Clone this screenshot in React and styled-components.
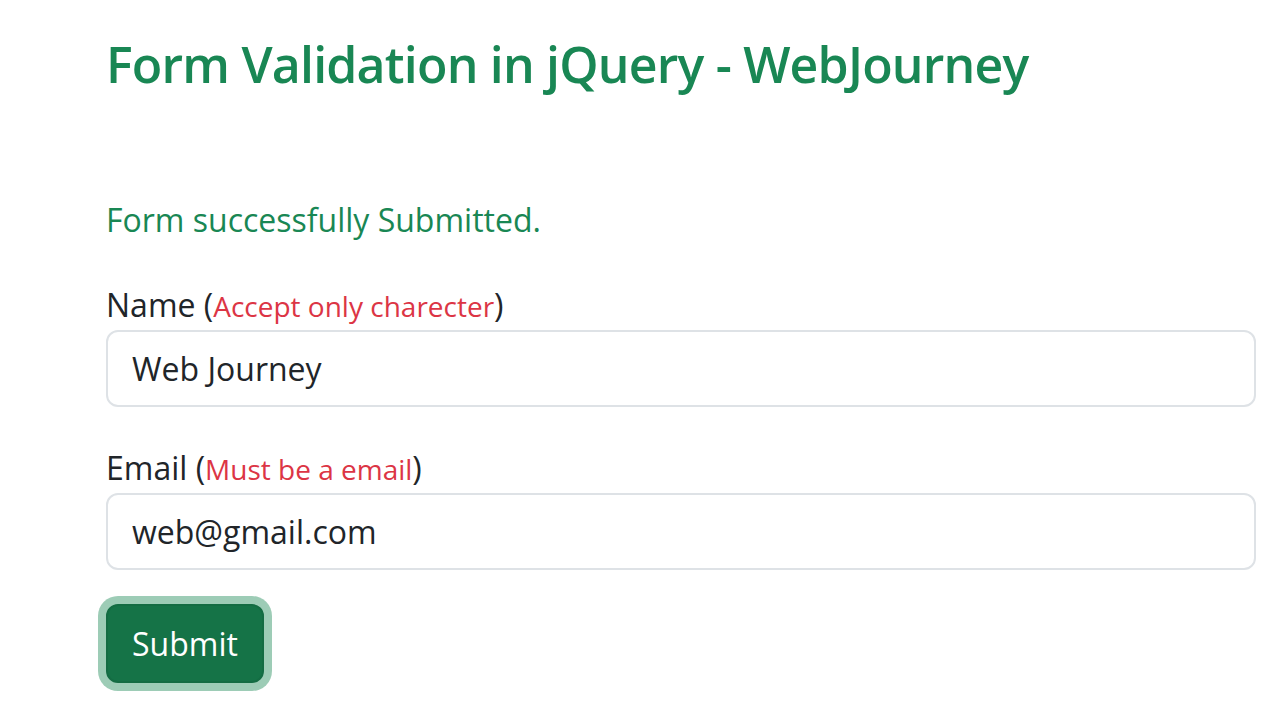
import React from "react";
import styled, { createGlobalStyle } from "styled-components";

const Global = createGlobalStyle`
  html, body { margin: 0; padding: 0; background: #fff; min-height: 100%; }
  body { font-family: "Open Sans", "Noto Sans", sans-serif; color: #212529; }
`;

const Page = styled.div`
  min-height: 720px;
  box-sizing: border-box;
  padding: 34px 24px 30px 106px;
`;

const Title = styled.h3`
  margin: 0 0 102px;
  font-size: 50px;
  font-weight: 600;
  letter-spacing: -0.8px;
  line-height: 60px;
  color: #198754;
`;

const Success = styled.p`
  margin: 0 0 37px;
  font-size: 32px;
  line-height: 48px;
  color: #198754;
`;

const Field = styled.div`
  margin-bottom: ${(p) => p.$mb}px;
`;

const Label = styled.label`
  display: block;
  font-size: 32px;
  line-height: 48px;
  color: #212529;
`;

const Hint = styled.small`
  font-size: 28px;
  color: #dc3545;
`;

const Input = styled.input`
  display: block;
  box-sizing: border-box;
  width: 100%;
  height: 77px;
  padding: 0 24px;
  font-family: inherit;
  font-size: 32px;
  color: #212529;
  border: 2px solid #dee2e6;
  border-radius: 12px;
  background: #fff;
  outline: none;
`;

const Button = styled.button`
  box-sizing: border-box;
  height: 79px;
  padding: 0 24px;
  font-family: inherit;
  font-size: 32px;
  color: #fff;
  background: #157347;
  border: 2px solid #146c43;
  border-radius: 12px;
  box-shadow: 0 0 0 8px rgba(60, 153, 110, 0.5);
  cursor: pointer;
`;

export default function App() {
  return (
    <>
      <Global />
      <Page>
        <Title>Form Validation in jQuery - WebJourney</Title>
        <Success>Form successfully Submitted.</Success>
        <Field $mb={37}>
          <Label>
            Name (<Hint>Accept only charecter</Hint>)
          </Label>
          <Input defaultValue="Web Journey" />
        </Field>
        <Field $mb={34}>
          <Label>
            Email (<Hint>Must be a email</Hint>)
          </Label>
          <Input defaultValue="web@gmail.com" />
        </Field>
        <Button>Submit</Button>
      </Page>
    </>
  );
}
